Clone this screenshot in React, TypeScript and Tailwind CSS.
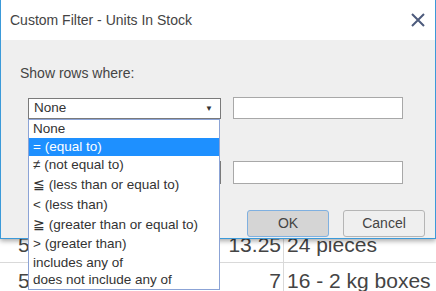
import React from "react";

const items: { label: string; h: number; selected?: boolean }[] = [
  { label: "None", h: 18 },
  { label: "= (equal to)", h: 18, selected: true },
  { label: "≠ (not equal to)", h: 19 },
  { label: "≦ (less than or equal to)", h: 20 },
  { label: "< (less than)", h: 20 },
  { label: "≧ (greater than or equal to)", h: 20 },
  { label: "> (greater than)", h: 19 },
  { label: "includes any of", h: 18 },
  { label: "does not include any of", h: 17 },
];

export default function App() {
  return (
    <div
      className="relative w-[436px] h-[291px] overflow-hidden bg-white text-[#333]"
      style={{ fontFamily: '"Liberation Sans", Arial, sans-serif' }}
    >
      {/* background grid */}
      <div className="pt-[227px] text-[21px] leading-[36px] text-[#444]">
        <div className="flex h-[36px] border-b border-[#d9d9d9]">
          <div className="w-[283px] flex justify-between pl-[18px] pr-[2px]">
            <span>5</span>
            <span>13.25</span>
          </div>
          <div className="border-l border-[#d9d9d9] pl-[3px]">24 pieces</div>
        </div>
        <div className="flex h-[36px]">
          <div className="w-[283px] flex justify-between pl-[18px] pr-[2px]">
            <span>5</span>
            <span>7</span>
          </div>
          <div className="border-l border-[#d9d9d9] pl-[3px]">16 - 2 kg boxes</div>
        </div>
      </div>

      {/* dialog */}
      <div className="absolute left-0 top-0 w-[436px] h-[239px] border-x border-b border-[#3b9ad9] bg-[#efefef] shadow-[0_2px_5px_rgba(0,0,0,0.35)] flex flex-col">
        <div className="h-[40px] bg-white flex items-center justify-between pl-[9px] pr-[10px] text-[14px] text-[#444]">
          <span>Custom Filter - Units In Stock</span>
          <svg width="14" height="14" viewBox="0 0 14 14">
            <path d="M1 1 L13 13 M13 1 L1 13" stroke="#4d5b7c" strokeWidth="2" />
          </svg>
        </div>
        <div className="flex flex-col">
          <div className="mt-[25px] pl-[19px] h-[16px] leading-[16px] text-[14px] text-[#444]">
            Show rows where:
          </div>
          <div className="mt-[16px] pl-[27px] flex items-start">
            <div className="mt-[1px] w-[193px] h-[21px] bg-white border border-[#7a7a7a] flex items-center justify-between pl-[5px] pr-[7px] text-[13.5px] text-[#333]">
              <span>None</span>
              <span className="text-[8px] text-[#333]">▼</span>
            </div>
            <div className="ml-[12px] w-[170px] h-[22px] bg-white border border-[#a8a8a8]" />
          </div>
          <div className="mt-[42px] pl-[27px] flex items-start">
            <div className="w-[193px] h-[23px] bg-white border border-[#7a7a7a]" />
            <div className="ml-[12px] w-[170px] h-[23px] bg-white border border-[#a8a8a8]" />
          </div>
          <div className="mt-[26px] flex justify-end gap-[14px] pr-[10px] text-[14px] text-[#444]">
            <button className="w-[82px] h-[27px] rounded-[3px] bg-[#d5d5d5] border border-[#7fb0e0] flex items-center justify-center">
              OK
            </button>
            <button className="w-[82px] h-[27px] rounded-[3px] bg-[#efefef] border border-[#b5b5b5] flex items-center justify-center">
              Cancel
            </button>
          </div>
        </div>
      </div>

      {/* dropdown list */}
      <div className="absolute left-[28px] top-[119px] w-[192px] bg-white border border-[#8ba3d6] text-[13.5px] text-[#333]">
        {items.map((it) => (
          <div
            key={it.label}
            style={{ height: it.h }}
            className={
              "flex items-center pl-[4px] whitespace-nowrap " +
              (it.selected ? "bg-[#1e90ff] text-white" : "")
            }
          >
            {it.label}
          </div>
        ))}
      </div>
    </div>
  );
}
